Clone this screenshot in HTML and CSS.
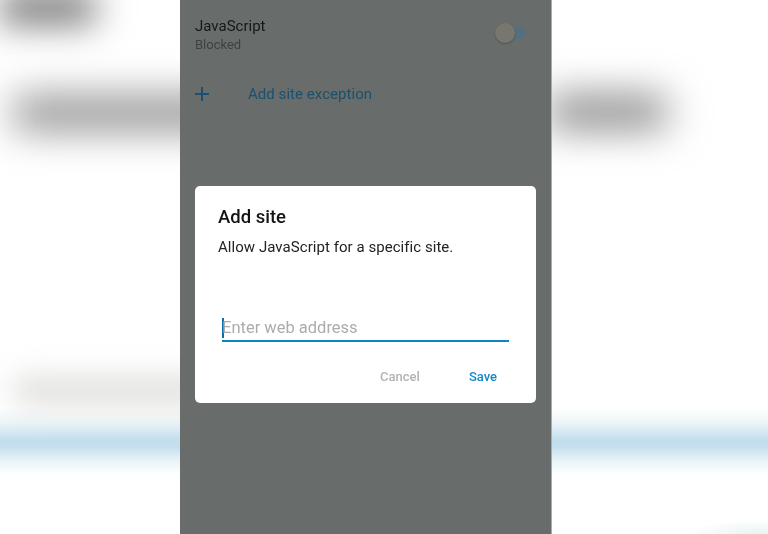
FILE: index.html
```html
<!DOCTYPE html>
<html lang="en">

<head>
    <meta charset="UTF-8">
    <meta name="viewport" content="width=device-width, initial-scale=1.0">
    <title>Add site</title>
    <link rel="stylesheet" href="styles.css">
</head>

<body>
    <div class="side side-left">
        <div class="smear smear-top"></div>
        <div class="smear smear-band"></div>
        <div class="smear smear-pale"></div>
    </div>
    <div class="phone">
        <div class="setting-row">
            <div class="setting-text">
                <div class="setting-name">JavaScript</div>
                <div class="setting-state">Blocked</div>
            </div>
            <div class="toggle">
                <div class="toggle-knob"></div>
            </div>
        </div>
        <div class="add-row">
            <svg class="add-icon" width="14" height="14" viewBox="0 0 14 14">
                <path d="M7 0V14M0 7H14" stroke="#1a5070" stroke-width="2" fill="none" />
            </svg>
            <span class="add-label">Add site exception</span>
        </div>
        <div class="dialog">
            <div class="dialog-title">Add site</div>
            <div class="dialog-text">Allow JavaScript for a specific site.</div>
            <div class="field">
                <span class="caret"></span>
                <input type="text" class="address" placeholder="Enter web address">
            </div>
            <div class="actions">
                <button class="btn btn-cancel">Cancel</button>
                <button class="btn btn-save">Save</button>
            </div>
        </div>
    </div>
    <div class="side side-right">
        <div class="smear smear-right"></div>
    </div>
</body>

</html>
```

FILE: styles.css
```css
* {
    margin: 0;
    padding: 0;
    box-sizing: border-box;
    outline: none;
}

body {
    width: 768px;
    height: 534px;
    overflow: hidden;
    display: flex;
    font-family: Roboto, sans-serif;
    background-color: white;
}

.side {
    height: 534px;
    overflow: hidden;
    display: flex;
    flex-direction: column;
    background: linear-gradient(to bottom, white 408px, rgb(238, 246, 249) 422px, rgb(195, 222, 237) 440px, rgb(195, 222, 237) 446px, rgb(235, 245, 249) 462px, white 475px);
}

.side-left {
    width: 180px;
}

.side-right {
    flex: 1;
    background:
        radial-gradient(ellipse 70px 14px at 205px 534px, rgb(232, 243, 240), rgba(232, 243, 240, 0)),
        linear-gradient(to bottom, white 408px, rgb(238, 246, 249) 422px, rgb(195, 222, 237) 440px, rgb(195, 222, 237) 446px, rgb(235, 245, 249) 462px, white 475px);
}

.smear {
    flex-shrink: 0;
}

.smear-top {
    width: 95px;
    height: 30px;
    margin-top: -7px;
    background-color: rgb(100, 102, 100);
    filter: blur(18px);
}

.smear-band {
    width: 240px;
    height: 30px;
    margin: 75px 0 0 14px;
    background-color: rgb(125, 127, 125);
    filter: blur(20px);
}

.smear-pale {
    width: 240px;
    height: 22px;
    margin: 252px 0 0 14px;
    background-color: rgb(212, 213, 209);
    filter: blur(16px);
}

.smear-right {
    width: 118px;
    height: 30px;
    margin: 97px 0 0 -4px;
    background-color: rgb(118, 120, 118);
    filter: blur(20px);
}

.phone {
    width: 372px;
    height: 534px;
    flex-shrink: 0;
    padding: 0 15px;
    background-color: rgb(104, 109, 107);
    border-right: 1px solid rgb(170, 172, 171);
}

.setting-row {
    display: flex;
    justify-content: space-between;
    align-items: center;
    height: 66px;
    padding-top: 3px;
    filter: blur(0.4px);
}

.setting-name {
    font-size: 15px;
    line-height: 20px;
    color: rgb(22, 24, 24);
}

.setting-state {
    font-size: 13px;
    line-height: 18px;
    color: rgb(62, 65, 64);
}

.toggle {
    display: flex;
    align-items: center;
    width: 31px;
    height: 12px;
    margin-right: 10px;
    margin-bottom: 3px;
    border-radius: 6px;
    background-color: rgb(84, 112, 126);
}

.toggle-knob {
    width: 20px;
    height: 20px;
    border-radius: 50%;
    background-color: rgb(120, 118, 110);
    box-shadow: 0 1px 2px rgba(0, 0, 0, 0.25);
}

.add-row {
    display: flex;
    align-items: center;
    height: 20px;
    margin-top: 18px;
    filter: blur(0.4px);
}

.add-label {
    margin-left: 39px;
    font-size: 15px;
    letter-spacing: 0.05px;
    color: rgb(26, 80, 112);
}

.dialog {
    display: flex;
    flex-direction: column;
    height: 217px;
    margin-top: 82px;
    padding: 20px 23px 0;
    border-radius: 5px;
    background-color: white;
}

.dialog-title {
    font-size: 18.5px;
    line-height: 22px;
    font-weight: 500;
    color: rgb(20, 20, 20);
    filter: blur(0.4px);
}

.dialog-text {
    margin-top: 9px;
    font-size: 15px;
    line-height: 20px;
    letter-spacing: 0.05px;
    color: rgb(35, 35, 35);
    filter: blur(0.4px);
}

.field {
    display: flex;
    align-items: center;
    height: 27px;
    margin: 58px 4px 0 4px;
    border-bottom: 2px solid rgb(10, 132, 196);
}

.caret {
    width: 2px;
    height: 20px;
    margin-right: -2px;
    background-color: rgb(10, 110, 170);
}

.address {
    flex: 1;
    border: none;
    background-color: transparent;
    font-family: Roboto, sans-serif;
    font-size: 16.5px;
    filter: blur(0.4px);
}

.address::placeholder {
    color: rgb(172, 172, 172);
}

.actions {
    display: flex;
    justify-content: flex-end;
    gap: 49px;
    margin-top: 27px;
    padding-right: 16px;
    filter: blur(0.4px);
}

.btn {
    border: none;
    background-color: transparent;
    font-family: Roboto, sans-serif;
    font-size: 13px;
    font-weight: 500;
}

.btn-cancel {
    color: rgb(178, 178, 178);
}

.btn-save {
    color: rgb(20, 135, 200);
}
```
